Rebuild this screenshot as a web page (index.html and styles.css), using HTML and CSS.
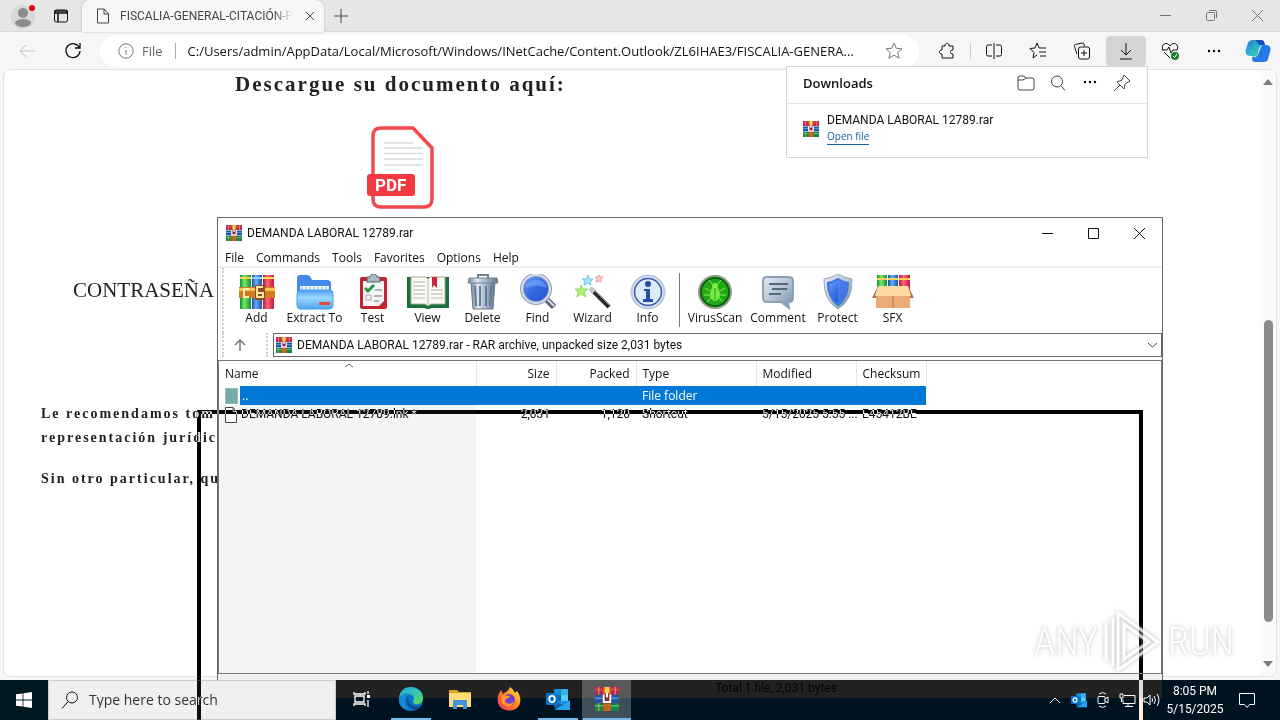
FILE: index.html
```html
<!DOCTYPE html>
<html lang="en">
<head>
    <meta charset="UTF-8">
    <meta name="viewport" content="width=device-width, initial-scale=1.0">
    <title>FISCALIA-GENERAL-CITACIÓN</title>
    <link rel="stylesheet" href="styles.css">
</head>
<body>
    <!-- Shared icons -->
    <svg class="sprite" aria-hidden="true">
        <symbol id="rar" viewBox="0 0 16 16">
            <path fill="#b3246b" d="M0 0h16v5H0z"/><path fill="#2456a8" d="M0 5.500h16v5H0z"/><path fill="#188548" d="M0 11h16v5H0z"/>
            <path fill="#e43a45" d="M0 1h16v1.500H0z"/><path fill="#5595dc" d="M0 7h16v1H0z"/><path fill="#4eb867" d="M0 12h16v1H0z"/>
            <path fill="#e7bd3d" d="M2 0h1v5H2zM13 0h1v5h-1zM2 11h1v5H2z" opacity=".6"/>
            <path fill="#c9641f" d="M5.500 0h5v16h-5z"/><path fill="#f9cf54" d="M6.500 0h3v4h-3z"/>
            <path fill="#8b2638" d="M5 5h6v6H5z"/><path fill="none" stroke="#fff" stroke-width="1.300" d="M5.800 5v5h4.400V5M8 4v3"/>
        </symbol>
        <symbol id="outlook" viewBox="0 0 24 22">
            <path fill="#1490df" d="M8 1h14v18H8z"/><path fill="#32b1ec" d="M15 1h7v6h-7z"/><path fill="#0864b0" d="M8 7h7v6H8z"/><path fill="#50d0fb" d="M15 7h7v6h-7z"/>
            <path fill="#0b5da9" d="m8 11 8 6 8-5v10H9z"/><path fill="#24a5e8" d="m9 22 15-10v10z"/><rect y="5" width="12" height="12" rx="1" fill="#0873ce"/>
            <ellipse cx="6" cy="11" rx="2.800" ry="3.200" fill="none" stroke="#fff" stroke-width="1.800"/>
        </symbol>
        <linearGradient id="edgeGreen" x1="0" y1="0" x2="1" y2="1"><stop stop-color="#22a6df"/><stop offset=".5" stop-color="#31c6b4"/><stop offset="1" stop-color="#65dc4b"/></linearGradient>
        <linearGradient id="fire" x1="1" y1="0" x2="0" y2="1"><stop stop-color="#fff13f"/><stop offset=".45" stop-color="#ff8a23"/><stop offset="1" stop-color="#f02865"/></linearGradient>
        <linearGradient id="folder" x2="0" y2="1"><stop stop-color="#4c98f5"/><stop offset=".4" stop-color="#9bd9ff"/><stop offset="1" stop-color="#4fa5ea"/></linearGradient>
        <linearGradient id="steel" x2="1" y2="1"><stop stop-color="#e4ebf2"/><stop offset=".5" stop-color="#b5c4d4"/><stop offset="1" stop-color="#71879f"/></linearGradient>
        <linearGradient id="blue" x2="1" y2="1"><stop stop-color="#6ca7fb"/><stop offset=".5" stop-color="#3268e1"/><stop offset="1" stop-color="#2350c8"/></linearGradient>
        <linearGradient id="can" x2="1"><stop stop-color="#71889e"/><stop offset=".3" stop-color="#dce8f1"/><stop offset=".6" stop-color="#a4b6c8"/><stop offset="1" stop-color="#60788e"/></linearGradient>
        <linearGradient id="copilot" x1="0" y1="0" x2="1" y2="1"><stop stop-color="#2478d4"/><stop offset=".55" stop-color="#2db9ce"/><stop offset="1" stop-color="#55ce72"/></linearGradient>
        <linearGradient id="green" x2="1"><stop stop-color="#0c8f35"/><stop offset=".4" stop-color="#7bea68"/><stop offset="1" stop-color="#128a36"/></linearGradient>
        <linearGradient id="bookBlue" x2="1"><stop stop-color="#1947a0"/><stop offset=".4" stop-color="#64b0ff"/><stop offset="1" stop-color="#1b4daf"/></linearGradient>
        <linearGradient id="bookRed" x2="1"><stop stop-color="#b5143a"/><stop offset=".4" stop-color="#ff6478"/><stop offset="1" stop-color="#c01836"/></linearGradient>
    </svg>

    <div class="desktop">
        <!-- Browser -->
        <section class="browser">
            <header class="tabs">
                <button class="icon-btn profile" aria-label="Profile"><svg width="26" height="26" viewBox="0 0 26 26"><circle cx="12" cy="14" r="12" fill="#d8d8d8"/><circle cx="12" cy="10" r="5" fill="#8c8c8c"/><ellipse cx="12" cy="20" rx="8" ry="4" fill="#8c8c8c"/><circle cx="21" cy="5" r="3" fill="#d90b18"/></svg></button>
                <button class="icon-btn" aria-label="Tab actions"><svg width="16" height="16" viewBox="0 0 16 16" class="line dark"><rect x="1.500" y="2" width="13" height="12" rx="2"/><path d="M2 3h12v2H2zM5 5v9" stroke-width="1.500"/></svg></button>
                <div class="tab">
                    <svg width="14" height="16" viewBox="0 0 14 16" class="line"><path d="M1.500 1h6.500l4.500 5v9h-11zM8 1v5h4.500"/></svg>
                    <span class="tab-title">FISCALIA-GENERAL-CITACIÓN-P</span>
                    <button class="close" aria-label="Close tab"><svg width="10" height="10" viewBox="0 0 10 10" class="line"><path d="m1 1 8 8M9 1 1 9"/></svg></button>
                </div>
                <button class="icon-btn" aria-label="New tab"><svg width="14" height="14" viewBox="0 0 14 14" class="line"><path d="M7 0v14M0 7h14"/></svg></button>
                <div class="window-buttons faded">
                    <button aria-label="Minimize"><svg width="11" height="11" viewBox="0 0 11 11" class="line"><path d="M0 5.500h11"/></svg></button>
                    <button aria-label="Restore"><svg width="11" height="11" viewBox="0 0 11 11" class="line"><rect x=".5" y="2.500" width="8" height="8" rx="1"/><path d="M3 .5h6q1.500 0 1.500 1.500v6"/></svg></button>
                    <button aria-label="Close"><svg width="11" height="11" viewBox="0 0 11 11" class="line"><path d="m0 0 11 11M11 0 0 11"/></svg></button>
                </div>
            </header>
            <nav class="toolbar">
                <button class="nav-btn pale" aria-label="Back"><svg width="18" height="18" viewBox="0 0 18 18" class="line"><path d="M17 9H2m6-6L2 9l6 6"/></svg></button>
                <button class="nav-btn" aria-label="Refresh"><svg width="18" height="18" viewBox="0 0 18 18" class="line dark"><path d="M15.500 6A7 7 0 1 0 16 9M16 1v5h-5" stroke-width="1.300"/></svg></button>
                <div class="address">
                    <svg width="16" height="16" viewBox="0 0 16 16" class="line muted"><circle cx="8" cy="8" r="7.200"/><path d="M8 7v5M8 4v1"/></svg>
                    <label for="url">File</label>
                    <input id="url" type="text" value="C:/Users/admin/AppData/Local/Microsoft/Windows/INetCache/Content.Outlook/ZL6IHAE3/FISCALIA-GENERA...">
                    <button class="close" aria-label="Favorite"><svg width="18" height="18" viewBox="0 0 18 18" class="line muted"><path d="m9 1 2.300 5.300 5.700.5-4.300 3.700 1.400 5.700L9 13.200l-5.100 3 1.400-5.700L1 6.800l5.700-.5z"/></svg></button>
                </div>
                <div class="actions">
                    <button aria-label="Extensions"><svg width="18" height="18" viewBox="0 0 18 18" class="line dark"><path d="M4 4h3c-.5-3.500 4.500-3.500 4 0h4v4c-3.500-.5-3.500 4.500 0 4v4H4v-4c-3.500.5-3.500-4.500 0-4z"/></svg></button>
                    <span class="divider"></span>
                    <button aria-label="Split screen"><svg width="18" height="18" viewBox="0 0 18 18" class="line dark"><path d="M7 3H3q-1.500 0-1.500 1.500v8Q1.500 14 3 14h4M11 3h4q1.500 0 1.500 1.500v8q0 1.500-1.500 1.500h-4M9 1v16"/></svg></button>
                    <button aria-label="Favorites"><svg width="18" height="18" viewBox="0 0 18 18" class="line dark"><path d="M10 6 8 1 6 6 1 6.500l4 4L4 16l4-3M10 6h7M10 10h7M11 14h6"/></svg></button>
                    <button aria-label="Collections"><svg width="18" height="18" viewBox="0 0 18 18" class="line dark"><path d="M4 12 1.500 4.500Q1 3 2.500 2.500L9 1q1.500 0 2 1l.5 2"/><rect x="5.500" y="5" width="11" height="12" rx="2"/><path d="M11 8v6M8 11h6"/></svg></button>
                    <button class="active" aria-label="Downloads"><svg width="16" height="18" viewBox="0 0 16 18" class="line dark"><path d="M8 1v12m-5-5 5 5 5-5M2 17h12"/></svg></button>
                    <button aria-label="Browser essentials"><svg width="18" height="18" viewBox="0 0 18 18" class="line dark"><path d="M2 8C-1 2 6-1 9 4c3-5 10-2 7 4M1 8h5l2-3 2 6 2-3h4M3 10l6 6"/><circle cx="14" cy="14" r="4" fill="#168326" stroke="none"/><path d="m12 14 1.500 1.500L16 12" stroke="#fff"/></svg></button>
                    <button aria-label="Settings"><svg width="16" height="16" viewBox="0 0 16 16"><circle cx="3" cy="8" r="1.200"/><circle cx="8" cy="8" r="1.200"/><circle cx="13" cy="8" r="1.200"/></svg></button>
                    <button aria-label="Copilot"><svg width="26" height="26" viewBox="0 0 26 26"><path fill="url(#copilot)" d="M8 2h8c3 0 4 3 4 5-5-1-6 4-7 8-1 4-3 4-7 3-5 0-6-3-5-7l2-6c1-2 2-3 5-3z"/><path fill="#247be5" d="M18 7h3c5 0 5 4 4 7l-2 7c-1 3-3 3-6 3h-7c-3 0-3-3-3-5 5 1 6-2 7-5l2-5c0-1 1-2 2-2z"/><path fill="#1650be" d="M10 2h6c3 0 3 2 4 5h-5c-2 0-2-3-5-5z"/></svg></button>
                </div>
            </nav>
            <div class="page">
                <article class="letter">
                    <h1>Descargue su documento aquí:</h1>
                    <svg class="pdf" width="70" height="84" viewBox="0 0 70 84" role="img" aria-label="PDF">
                        <path fill="#fff" stroke="#f4484d" stroke-width="3.500" d="M15 2h32l19 20v51q0 8-8 8H15q-8 0-8-8V10q0-8 8-8z"/>
                        <path stroke="#d8dcdf" stroke-width="1.500" d="M18 17h29M18 22h39M18 27.500h39M18 33h39M18 39h39"/>
                        <rect x="1" y="48" width="48" height="22" rx="3" fill="#f4383f"/><text x="9" y="65" class="pdf-text">PDF</text>
                    </svg>
                    <p class="password">CONTRASEÑA D</p>
                    <p class="advice">Le recomendamos tom<br>representación jurídic</p>
                    <p class="closing">Sin otro particular, que</p>
                </article>
                <div class="scrollbar">
                    <svg width="10" height="6" viewBox="0 0 10 6"><path fill="#7c7c7c" d="M5 0l5 6H0z"/></svg>
                    <span class="thumb"></span>
                    <svg width="10" height="6" viewBox="0 0 10 6"><path fill="#7c7c7c" d="M0 0h10L5 6z"/></svg>
                </div>
            </div>
        </section>

        <!-- Downloads flyout -->
        <aside class="downloads">
            <header>
                <h2>Downloads</h2>
                <button aria-label="Open folder"><svg width="18" height="16" viewBox="0 0 18 16" class="line"><path d="M1 3q0-2 2-2h4l2 2h6q2 0 2 2v8q0 2-2 2H3q-2 0-2-2zM1 5h5l3-2"/></svg></button>
                <button aria-label="Search"><svg width="16" height="16" viewBox="0 0 16 16" class="line"><circle cx="7" cy="6.500" r="5.500"/><path d="m11 10.500 4 5"/></svg></button>
                <button aria-label="More"><svg width="16" height="16" viewBox="0 0 16 16"><circle cx="3" cy="7" r="1.200"/><circle cx="8" cy="7" r="1.200"/><circle cx="13" cy="7" r="1.200"/></svg></button>
                <button aria-label="Pin"><svg width="18" height="18" viewBox="0 0 18 18" class="line"><path d="m11 1 6 6-2 1-3 2-1 5-7-7 5-2zM7 11l-6 6"/></svg></button>
            </header>
            <div class="download">
                <svg width="16" height="16"><use href="#rar"/></svg>
                <div><p class="file-name">DEMANDA LABORAL 12789.rar</p><a href="#open">Open file</a></div>
            </div>
        </aside>

        <!-- Archive window -->
        <section class="archive">
            <header class="titlebar">
                <svg width="16" height="16"><use href="#rar"/></svg>
                <h2 class="file-name">DEMANDA LABORAL 12789.rar</h2>
                <div class="window-buttons">
                    <button aria-label="Minimize"><svg width="11" height="11" viewBox="0 0 11 11" class="line dark"><path d="M0 5.500h11"/></svg></button>
                    <button aria-label="Maximize"><svg width="11" height="11" viewBox="0 0 11 11" class="line dark"><path d="M.5.5h10v10H.5z"/></svg></button>
                    <button aria-label="Close"><svg width="11" height="11" viewBox="0 0 11 11" class="line dark"><path d="m0 0 11 11M11 0 0 11"/></svg></button>
                </div>
            </header>
            <nav class="menu"><button>File</button><button>Commands</button><button>Tools</button><button>Favorites</button><button>Options</button><button>Help</button></nav>
            <div class="tools">
                <button class="tool"><svg width="36" height="36" viewBox="0 0 36 36"><path fill="url(#green)" d="M1 1h11v34H1z"/><path fill="url(#bookBlue)" d="M13 1h10v34H13z"/><path fill="url(#bookRed)" d="M24 1h11v34H24z"/><path fill="#f7d94d" d="M1 3h11v2H1zM24 3h11v2H24z"/><path fill="#8ed0ff" d="M13 3h10v2H13z"/><path fill="#d27a20" d="M0 13h36v11H0z"/><path fill="#ffc34e" d="M0 14h36v3H0z"/><path fill="none" stroke="#fff1a9" stroke-width="2" d="M10 15H5v8h5"/><rect x="16" y="11" width="10" height="15" rx="1" fill="#8d4d21"/><path fill="none" stroke="#ffe5a0" stroke-width="2" d="M24 13h-6v10h6v-4h-5"/></svg>Add</button>
                <button class="tool extract"><svg width="38" height="36" viewBox="0 0 38 36"><path fill="#4388ea" d="M1 10V4q0-3 3-3h7q3 0 5 5h15q4 0 4 4v10H1z"/><path fill="#e9f5fd" d="M4 12h29v10H4z"/><path stroke="#8aa5bf" stroke-dasharray="2" d="M5 14h27"/><path fill="url(#folder)" stroke="#4b9de4" d="M1 20q0-4 3-4h30q3 0 3 4v11q0 4-4 4H4q-3 0-3-4z"/><rect x="23" y="28" width="11" height="3" rx="1" fill="#e64a45"/></svg>Extract To</button>
                <button class="tool"><svg width="32" height="36" viewBox="0 0 32 36"><rect x="3" y="3" width="27" height="32" rx="2" fill="#c2242f"/><path fill="#f5f5f5" d="M6 7h21v20l-5 5H6z"/><path fill="#aab9c4" stroke="#53606b" d="M10 3h3c0-4 7-4 7 0h3v5H10z"/><path fill="none" stroke="#269440" stroke-width="3" d="m8 14 3 3 6-6"/><path stroke="#6d737c" d="M18 16h7M17 22h8M17 27h5"/><path fill="none" stroke="#a7aaae" d="M9 21h5v5H9z"/></svg>Test</button>
                <button class="tool"><svg width="42" height="36" viewBox="0 0 42 36"><path fill="#17733c" d="M0 3h42v31H25q-4 2-8 0H0z"/><path fill="#fafbf4" stroke="#aaa99a" d="M4 3h15l2 2 2-2h15v27H24l-3 2-3-2H4z"/><path stroke="#b2b4ad" d="M6 8h12M6 12h12M6 16h12M6 20h12M6 24h12M24 16h12M24 20h12M24 24h12M21 5v26"/><path fill="#c92939" d="M25 3h5v11l-3-3-2 3z"/></svg>View</button>
                <button class="tool"><svg width="34" height="36" viewBox="0 0 34 36"><path fill="none" stroke="#738294" stroke-width="2" d="M12 5V1h10v4"/><path fill="url(#can)" stroke="#697b8b" d="M5 8h24l-2 27H7z"/><path fill="url(#can)" stroke="#718396" d="M3 4h28l1 5H2z"/><path stroke="#657d95" stroke-width="2" d="m9 12 1 20M14 12v20M20 12v20M25 12l-1 20"/></svg>Delete</button>
                <button class="tool"><svg width="38" height="36" viewBox="0 0 38 36"><path stroke="#59636f" stroke-width="6" d="m25 23 10 10"/><path stroke="#d3dae1" stroke-width="2" d="m25 22 10 10"/><circle cx="17" cy="15" r="14" fill="url(#blue)" stroke="#8d9bb5" stroke-width="4"/><circle cx="17" cy="15" r="14" fill="none" stroke="#d5dff0" stroke-width="2"/><path fill="#77a8ff" opacity=".6" d="M6 14C8 4 25 2 28 14q-11-5-22 0z"/></svg>Find</button>
                <button class="tool"><svg width="38" height="36" viewBox="0 0 38 36"><path stroke="#25282c" stroke-width="4" d="m17 15 18 18"/><path stroke="#888" d="m18 14 17 17"/><path stroke="#c5c8cc" stroke-width="4" d="m16 14 4 4"/><path fill="#b6ef6e" stroke="#90d868" d="m7 11 2 4 5 0-4 3 2 5-5-3-4 3 1-5-3-3h5z"/><path fill="#a5e9ff" stroke="#6cc6e5" d="m14 1 1 4h4l-3 3 1 3-3-2-4 2 1-4-3-2h4z"/><path fill="#ffc8ca" stroke="#ef9da3" d="m25 1 1 2h3l-2 2v3l-2-1-3 1 1-3-2-2h3z"/></svg>Wizard</button>
                <button class="tool"><svg width="36" height="36" viewBox="0 0 36 36"><circle cx="18" cy="18" r="16.500" fill="#dfe9fb" stroke="#bcc8df" stroke-width="2"/><circle cx="18" cy="18" r="13.500" fill="#dfeafd" stroke="#365a9e" stroke-width="1.500"/><circle cx="18" cy="10" r="3" fill="#2350a2"/><path fill="#2350a2" d="M14 15h6v10h3v3H13v-3h3v-8h-2z"/></svg>Info</button>
                <span class="tool-divider"></span>
                <button class="tool virus"><svg width="36" height="36" viewBox="0 0 36 36"><circle cx="18" cy="18" r="16" fill="#168c19" stroke="#8d9a8c" stroke-width="2"/><circle cx="18" cy="18" r="14" fill="#26a719" stroke="#075a0c" stroke-width="1.500"/><ellipse cx="18" cy="20" rx="5" ry="7" fill="#76ed43"/><circle cx="18" cy="12" r="3" fill="#7bf147"/><path stroke="#79ed48" d="m15 10-3-4M21 10l3-4M13 17l-5-3M13 21H7M14 24l-4 4M23 17l5-3M23 21h6M22 24l4 4" fill="none"/><path stroke="#279b20" d="M18 14v12"/></svg>VirusScan</button>
                <button class="tool comment"><svg width="34" height="36" viewBox="0 0 34 36"><path fill="url(#steel)" stroke="#8da1b5" stroke-width="2" d="M6 3h22q4 0 4 4v17q0 4-4 4h-1l1 6-8-6H6q-4 0-4-4V7q0-4 4-4z"/><path stroke="#53677c" stroke-width="2" d="M8 10h19M11 15h15M8 20h12"/></svg>Comment</button>
                <button class="tool"><svg width="34" height="36" viewBox="0 0 34 36"><path fill="url(#steel)" stroke="#9aaaba" d="M17 0q7 4 14 5 1 21-14 30Q2 26 3 5q7-1 14-5z"/><path fill="url(#blue)" stroke="#3773df" stroke-width="2" d="M17 5q5 3 10 4 0 15-10 22Q7 24 7 9q5-1 10-4z"/><path fill="#598cf0" opacity=".5" d="M17 5q5 3 10 4 0 15-10 22z"/></svg>Protect</button>
                <button class="tool"><svg width="44" height="36" viewBox="0 0 44 36"><path fill="url(#green)" d="M6 1h10v15H6z"/><path fill="url(#bookBlue)" d="M17 1h10v15H17z"/><path fill="url(#bookRed)" d="M28 1h11v15H28z"/><path fill="#ffcf54" d="M6 4h10v2H6zM17 4h10v2H17zM28 4h11v2H28z"/><path fill="#b56d48" d="m7 12-6 12h4v10h34V24h4l-6-12z"/><path fill="#eeaa74" d="M5 21h34v13H5z"/><path fill="#ffd9a4" d="M7 12h30l3 10H4z"/><path stroke="#b77348" d="M22 22v12"/></svg>SFX</button>
            </div>
            <div class="location">
                <button class="up" aria-label="Up one level"><svg width="12" height="12" viewBox="0 0 12 12" class="line muted"><path d="M6 12V1M1 6l5-5 5 5" stroke-width="1.500"/></svg></button>
                <div class="path-box">
                    <svg width="16" height="16"><use href="#rar"/></svg>
                    <select class="file-name" aria-label="Archive path"><option>DEMANDA LABORAL 12789.rar - RAR archive, unpacked size 2,031 bytes</option></select>
                    <svg width="9" height="6" viewBox="0 0 9 6" class="line"><path d="m0 1 4.500 4L9 1"/></svg>
                </div>
            </div>
            <div class="file-list">
                <svg class="sort" width="8" height="5" viewBox="0 0 8 5" class="line"><path fill="none" stroke="#555" d="m0 4 4-3 4 3"/></svg>
                <table>
                    <colgroup><col class="col-name"><col class="col-number"><col class="col-number"><col class="col-type"><col class="col-date"><col class="col-check"></colgroup>
                    <thead><tr><th>Name</th><th class="number">Size</th><th class="number">Packed</th><th>Type</th><th>Modified</th><th>Checksum</th></tr></thead>
                    <tbody>
                        <tr class="selected"><td><span class="entry parent"><i class="folder-icon"></i>..</span></td><td></td><td></td><td>File folder</td><td></td><td></td></tr>
                        <tr class="file-name"><td><span class="entry"><svg width="12" height="16" viewBox="0 0 12 16" class="line"><path fill="#fff" d="M.5.500H8l3.500 4v11H.5zM8 .5v4h3.500"/></svg>DEMANDA LABORAL 12789.lnk *</span></td><td class="number">2,031</td><td class="number">1,120</td><td>Shortcut</td><td>5/15/2025 5:55 ...</td><td>E45412BE</td></tr>
                    </tbody>
                </table>
            </div>
        </section>

        <!-- Taskbar -->
        <footer class="taskbar">
            <button class="start" aria-label="Start"><svg width="16" height="16" viewBox="0 0 16 16"><path fill="#fff" d="M0 2.300 6.600 1.400v6.200H0zM7.400 1.300 16 0v7.600H7.400zM0 8.400h6.600v6.200L0 13.700zM7.400 8.400H16V16l-8.600-1.200z"/></svg></button>
            <div class="search">
                <svg width="18" height="18" viewBox="0 0 18 18" class="line dark"><circle cx="11" cy="6.500" r="5.500"/><path d="m7 10.500-6 7"/></svg>
                <input type="text" placeholder="Type here to search" aria-label="Search">
            </div>
            <div class="apps">
                <div class="status file-name">Total 1 file, 2,031 bytes</div>
                <button aria-label="Task view"><svg width="18" height="16" viewBox="0 0 18 16" class="line white"><path d="M1 1v2h11V1M1 15v-2h11v2M2 5h9v6H2zM15 0v3M15 9v7" stroke-width="1.300"/><path fill="#fff" d="M14 4h3v3h-3z" stroke="none"/></svg></button>
                <button class="open" aria-label="Edge"><svg width="26" height="26" viewBox="0 0 26 26"><circle cx="13" cy="13" r="12" fill="#0875c9"/><path fill="url(#edgeGreen)" d="M1 12C2 4 7 1 13 1c7 0 12 5 12 11 0 5-4 7-8 6-3-1-2-3-1-5 1-5-10-8-15-1z"/><path fill="#07519b" d="M10 10c-4 5 0 12 6 14 3 0 6-2 8-5-8 4-14-1-14-9z"/><path fill="#168bd2" d="M1 12c3-5 9-6 12-3-7 0-9 10-1 15C4 24 0 18 1 12z"/></svg></button>
                <button aria-label="File Explorer"><svg width="24" height="22" viewBox="0 0 24 22"><path fill="#dca222" d="M1 2h8l2 2h12v4H1z"/><path fill="#ffdc76" d="M1 5h22v14H1z"/><path fill="#4196da" d="M5 12h14v9h-4v-4H9v4H5z"/></svg></button>
                <button aria-label="Firefox"><svg width="24" height="24" viewBox="0 0 24 24"><path fill="url(#fire)" d="M13 0c3 2 4 4 5 6l2-2c3 4 4 8 3 12-2 10-19 10-22 0C0 12 1 7 4 3l2 4c2-2 5-2 7-7z"/><circle cx="12" cy="13" r="6" fill="#713dce"/><path fill="#ff9826" d="M4 9c3-2 5 0 9 0-1 3-5 2-5 5 2 4 7 3 9 0-1 7-10 7-12 1z"/></svg></button>
                <button class="open" aria-label="Outlook"><svg width="24" height="22"><use href="#outlook"/></svg></button>
                <button class="open current" aria-label="WinRAR"><svg width="24" height="24"><use href="#rar"/></svg></button>
            </div>
            <div class="tray">
                <button aria-label="Show hidden icons"><svg width="12" height="7" viewBox="0 0 12 7" class="line white"><path d="m1 6 5-5 5 5"/></svg></button>
                <button aria-label="Outlook"><svg width="16" height="16"><use href="#outlook"/></svg></button>
                <button aria-label="Camera"><svg width="12" height="16" viewBox="0 0 12 16" class="line white"><rect x="1" y="4.500" width="7" height="7" rx="1"/><path d="m8 7 3-2v6L8 9M2 2q4-3 7 0M2 14q4 3 7 0"/></svg></button>
                <button aria-label="Network"><svg width="17" height="14" viewBox="0 0 17 14" class="line white"><path d="M5 2.500h11v8H4v-4M9 10v3M6 13.500h8M1 1h3v4H1zM2.500 5v4"/></svg></button>
                <button aria-label="Volume"><svg width="17" height="14" viewBox="0 0 17 14" class="line white"><path d="M1 5h3l3-3v10L4 9H1zM9 5q1 2 0 4M11 3q3 4 0 8M14 1q4 6 0 12"/></svg></button>
                <time><span>8:05 PM</span><span>5/15/2025</span></time>
                <button class="notice" aria-label="Notifications"><svg width="16" height="16" viewBox="0 0 16 16" class="line white"><path d="M.5 1.500h15v11h-5l-2.500 3-2.500-3h-5z"/></svg></button>
            </div>
        </footer>

        <!-- Outline of the window being dragged -->
        <div class="drag-outline"></div>

        <!-- Watermark -->
        <div class="watermark">
            <span>ANY</span>
            <svg width="58" height="64" viewBox="0 0 58 64"><g fill="none" stroke="#fff" stroke-width="3"><path d="M9 8v48M2 13v38"/><path d="M14 3v57l40-28zM20 14v35l25-17z"/></g></svg>
            <span>RUN</span>
        </div>
    </div>
</body>
</html>
```
FILE: styles.css
```css
/* Base */
* {
    margin: 0;
    padding: 0;
    box-sizing: border-box;
}

body {
    font-family: "Open Sans", "Noto Sans", sans-serif;
    font-size: 12px;
    line-height: 16px;
    color: #111;
}

button {
    border: none;
    background: none;
    color: inherit;
    font: inherit;
    display: flex;
    align-items: center;
    justify-content: center;
}

input,
select {
    border: none;
    background: none;
    color: inherit;
    font: inherit;
    outline: none;
}

svg {
    flex: none;
}

.sprite {
    position: absolute;
    width: 0;
    height: 0;
}

.line {
    fill: none;
    stroke: #444;
}

.dark {
    stroke: #111;
}

.muted {
    stroke: #777;
}

.white {
    stroke: #fff;
}

.desktop {
    position: relative;
    height: 100vh;
    overflow: hidden;
    display: flex;
    flex-direction: column;
    background: #fff;
}

/* Browser */
.browser {
    flex: 1;
    min-height: 0;
    display: flex;
    flex-direction: column;
    background: #f6f6f6;
}

.tabs {
    height: 32px;
    display: flex;
    align-items: center;
    background: #e6e6e6;
    border-bottom: 1px solid #d9d9d9;
}

.icon-btn {
    width: 34px;
}

.profile {
    width: 44px;
    padding-left: 4px;
}

.tab {
    width: 242px;
    height: 32px;
    margin-left: 4px;
    padding: 0 8px 0 14px;
    display: flex;
    align-items: center;
    gap: 10px;
    background: #f7f7f7;
    border-radius: 8px 8px 0 0;
    box-shadow: 0 0 2px #aaa;
}

.tab-title {
    flex: 1;
    white-space: nowrap;
    color: #444;
    font-family: Roboto, sans-serif;
    mask-image: linear-gradient(to right, #000 88%, transparent);
}

.file-name {
    font-family: Roboto, sans-serif;
}

.close {
    width: 20px;
    height: 20px;
}

.window-buttons {
    display: flex;
    margin-left: auto;
}

.window-buttons button {
    width: 46px;
    height: 30px;
}

.faded {
    opacity: 0.7;
}

.toolbar {
    height: 37px;
    display: flex;
    align-items: center;
    padding-left: 4px;
}

.nav-btn {
    width: 46px;
}

.pale {
    opacity: 0.3;
}

.address {
    flex: 1;
    height: 32px;
    margin-left: 4px;
    padding: 0 15px 0 18px;
    display: flex;
    align-items: center;
    border-radius: 16px;
    background: #fff;
    font-size: 13px;
}

.address label {
    margin-left: 8px;
    padding-right: 12px;
    border-right: 1px solid #aaa;
    color: #666;
}

.address input {
    flex: 1;
    min-width: 0;
    margin: 0 14px 0 12px;
}

.actions {
    display: flex;
    align-items: center;
    margin-left: 6px;
}

.actions button {
    width: 44px;
    height: 30px;
}

.actions .active {
    width: 40px;
    margin: 0 2px;
    background: #d5d5d5;
    border-radius: 4px;
}

.divider {
    width: 1px;
    height: 16px;
    margin: 0 1px;
    background: #ccc;
}

.page {
    flex: 1;
    min-height: 0;
    margin: 0 3px 3px;
    display: flex;
    justify-content: space-between;
    background: #fff;
    border: 1px solid #e2e2e2;
    border-radius: 8px;
    overflow: hidden;
}

.letter {
    width: 756px;
    padding-left: 37px;
    font-family: "Liberation Serif", serif;
    color: #222;
}

.letter h1 {
    font-size: 21px;
    line-height: 28px;
    letter-spacing: 2px;
    text-align: center;
}

.pdf {
    display: block;
    margin: 28px auto 0;
}

.pdf-text {
    font: bold 17px Roboto, sans-serif;
    fill: #fff;
}

.password {
    margin: 68px 0 0 32px;
    font-size: 21px;
    line-height: 24px;
}

.advice,
.closing {
    font-size: 14px;
    font-weight: bold;
    letter-spacing: 2px;
    line-height: 24px;
    white-space: nowrap;
}

.advice {
    margin-top: 100px;
}

.closing {
    margin-top: 17px;
}

.scrollbar {
    width: 16px;
    padding: 9px 0;
    display: flex;
    flex-direction: column;
    align-items: center;
    background: #fafafa;
}

.thumb {
    width: 9px;
    height: 302px;
    margin: auto 0 39px;
    border-radius: 5px;
    background: #8a8a8a;
}

/* Downloads */
.downloads {
    position: absolute;
    top: 66px;
    right: 132px;
    width: 362px;
    background: #fff;
    border: 1px solid #d5d5d5;
}

.downloads header {
    height: 37px;
    padding: 0 9px 4px 16px;
    display: flex;
    align-items: center;
    border-bottom: 1px solid #e5e5e5;
}

.downloads h2 {
    flex: 1;
    font-size: 13px;
    font-weight: 600;
}

.downloads button {
    width: 32px;
}

.download {
    padding: 8px 16px 12px;
    display: flex;
    align-items: center;
    gap: 8px;
}

.download a {
    display: inline-block;
    color: #1264a3;
    font-size: 10px;
    text-decoration: none;
    border-bottom: 1px solid #1264a3;
}

/* Archive window */
.archive {
    position: absolute;
    top: 217px;
    left: 217px;
    right: 117px;
    bottom: 40px;
    display: flex;
    flex-direction: column;
    background: #fff;
    border: 1px solid #666;
    border-bottom: none;
}

.titlebar {
    height: 30px;
    padding-left: 8px;
    display: flex;
    align-items: center;
    gap: 5px;
}

.titlebar h2 {
    font-size: 12px;
    font-weight: normal;
}

.menu {
    height: 20px;
    padding: 2px 0 0 7px;
    display: flex;
    gap: 12px;
    border-bottom: 2px solid #f0f0f0;
}

.tools {
    height: 65px;
    margin-left: 4px;
    padding: 0 0 2px 5px;
    display: flex;
    align-items: center;
    border-left: 2px dotted #ccc;
}

.tool {
    width: 55px;
    flex-direction: column;
    white-space: nowrap;
}

.extract {
    width: 61px;
}

.virus {
    width: 62px;
}

.comment {
    width: 64px;
}

.tool-divider {
    width: 1px;
    height: 54px;
    margin: 0 4px;
    background: #777;
}

.location {
    height: 24px;
    margin-left: 4px;
    display: flex;
    border-left: 2px dotted #ccc;
}

.up {
    width: 44px;
    padding-right: 10px;
    border-right: 2px dotted #ccc;
}

.path-box {
    flex: 1;
    margin-left: 5px;
    padding: 0 4px 0 2px;
    display: flex;
    align-items: center;
    gap: 5px;
    border: 1px solid #666;
}

.path-box select {
    flex: 1;
    min-width: 0;
    appearance: none;
    font: 12px/16px Roboto, sans-serif;
}

.file-list {
    position: relative;
    flex: 1;
    margin-top: 3px;
    margin-bottom: 6px;
    border: 1px solid #777;
    background: linear-gradient(to right, #f5f5f5 257px, #fff 257px);
    box-shadow: 0 7px #efefef;
}

.sort {
    position: absolute;
    top: 2px;
    left: 126px;
}

table {
    width: 707px;
    table-layout: fixed;
    border-collapse: collapse;
}

thead {
    background: #fff;
}

th {
    height: 25px;
    padding: 0 6px;
    font-weight: normal;
    text-align: left;
    border-right: 1px solid #e5e5e5;
}

td {
    height: 19px;
    padding: 0 6px;
    line-height: 19px;
    white-space: nowrap;
}

.number {
    text-align: right;
}

.col-name {
    width: 257px;
}

.col-number {
    width: 80px;
}

.col-type {
    width: 120px;
}

.col-date {
    width: 100px;
}

.col-check {
    width: 70px;
}

.entry {
    display: flex;
    align-items: center;
    gap: 4px;
    height: 19px;
}

.folder-icon {
    width: 13px;
    height: 16px;
    background: #76aaa8;
    border: 1px solid #91bbb8;
}

.selected td {
    background: #0078d7;
    color: #fff;
}

.selected td:first-child {
    background: linear-gradient(to right, #fff 21px, #0078d7 21px);
}

/* Watermark */
.watermark {
    position: absolute;
    right: 46px;
    bottom: 46px;
    display: flex;
    align-items: center;
    gap: 6px;
    color: #fff;
    font: 300 38px/64px "Liberation Sans Narrow", "Roboto Condensed", Roboto, sans-serif;
    opacity: 0.8;
    filter: drop-shadow(0 0 2px #aaa);
    pointer-events: none;
}

/* Taskbar */
.taskbar {
    position: relative;
    height: 40px;
    display: flex;
    background: #001321;
    color: #fff;
}

.start {
    width: 48px;
    background: #001820;
}

.search {
    width: 288px;
    padding-left: 12px;
    display: flex;
    align-items: center;
    gap: 10px;
    background: #f0f0f0;
    border: 1px solid #ccc;
    color: #222;
    font-size: 14px;
}

.search input {
    flex: 1;
    min-width: 0;
}

.search input::placeholder {
    color: #333;
}

.apps {
    display: flex;
    margin-left: 1px;
}

.apps button {
    position: relative;
    width: 49px;
    border-bottom: 2px solid transparent;
}

.apps .open::after {
    content: "";
    position: absolute;
    bottom: -2px;
    width: 40px;
    height: 2px;
    background: #76b9ed;
}

.apps .current {
    background: rgba(255, 255, 255, 0.25);
}

.apps .current::after {
    width: 48px;
}

.status {
    position: absolute;
    top: 0;
    left: 336px;
    right: 118px;
    height: 18px;
    padding-left: 379px;
    background: #222;
    color: #050505;
}

.tray {
    position: relative;
    margin-left: auto;
    display: flex;
    align-items: center;
}

.tray button {
    width: 24px;
    height: 40px;
}

.tray time {
    width: 64px;
    display: flex;
    flex-direction: column;
    align-items: center;
    font-family: Roboto, sans-serif;
    line-height: 18px;
}

.tray .notice {
    width: 40px;
    margin-right: 13px;
}

/* Inverts whatever the outline passes over */
.drag-outline {
    position: absolute;
    top: 410px;
    left: 197px;
    right: 137px;
    bottom: 0;
    border: 4px solid #fff;
    border-bottom: none;
    mix-blend-mode: difference;
    pointer-events: none;
}
```
